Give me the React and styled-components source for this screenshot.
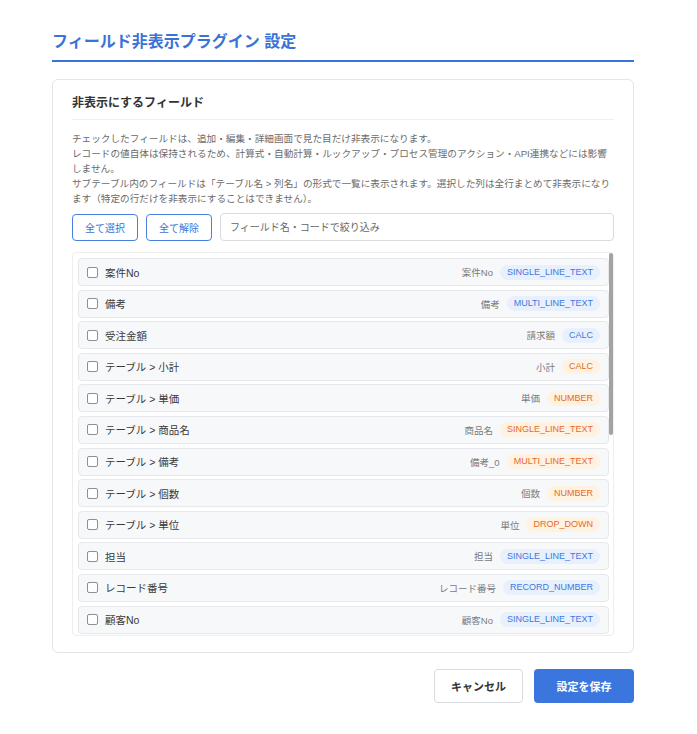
import React, { useState, useRef, useLayoutEffect } from "react";
import styled, { createGlobalStyle } from "styled-components";

const GlobalStyle = createGlobalStyle`
  html, body { margin: 0; padding: 0; background: #ffffff; }
  body { font-family: "Liberation Sans", "Noto Sans CJK JP", sans-serif; color: #333; }
  * { box-sizing: border-box; }
`;

const Page = styled.div`
  width: 582px;
  margin-left: 52px;
  padding-top: 30px;
  padding-bottom: 31px;
`;

const Title = styled.h1`
  margin: 0;
  font-size: 16px;
  line-height: 24px;
  font-weight: 700;
  color: #3a73d6;
  padding-bottom: 6px;
  border-bottom: 2px solid #3a73d6;
`;

const Card = styled.section`
  margin-top: 17px;
  border: 1px solid #e3e5e8;
  border-radius: 6px;
  padding: 14px 19px 16px 19px;
`;

const CardHeading = styled.h2`
  margin: 0;
  font-size: 12px;
  line-height: 18px;
  font-weight: 700;
  color: #333;
  padding-bottom: 7px;
  border-bottom: 1px solid #eef0f2;
`;

const Description = styled.div`
  margin-top: 11px;
  font-size: 9.65px;
  line-height: 15px;
  color: #6b6b6b;
`;

const Toolbar = styled.div`
  display: flex;
  align-items: center;
  gap: 8px;
  margin-top: 7px;
`;

const OutlineButton = styled.button`
  height: 27px;
  padding: 0 12px;
  border: 1px solid #4a80dd;
  border-radius: 4px;
  background: #fff;
  color: #3a73d6;
  font-family: inherit;
  font-size: 10px;
  flex: none;
`;

const SearchInput = styled.input`
  flex: 1;
  height: 28px;
  border: 1px solid #d9dcdf;
  border-radius: 4px;
  padding: 0 9px;
  font-family: inherit;
  font-size: 10px;
  color: #333;
  &::placeholder { color: #666; }
  &:focus { outline: none; }
`;

const ListFrame = styled.div`
  position: relative;
  margin-top: 11px;
  border: 1px solid #eceef0;
  border-radius: 4px;
`;

const List = styled.div`
  height: 382px;
  overflow-y: auto;
  padding: 5px 4px 5px 5px;
  scrollbar-width: none;
  &::-webkit-scrollbar { display: none; }
`;

const ScrollThumb = styled.div`
  position: absolute;
  right: 0;
  width: 4px;
  border-radius: 2px;
  background: #a3a3a3;
`;

const Row = styled.label`
  display: flex;
  align-items: center;
  height: 28px;
  margin-bottom: 3.6px;
  padding: 0 8px 0 8px;
  background: #f7f8fa;
  border: 1px solid #e6e8eb;
  border-radius: 4px;
`;

const Check = styled.span`
  width: 11px;
  height: 11px;
  border: 1px solid #8f8f8f;
  border-radius: 2px;
  background: ${(p) => (p.$checked ? "#3a73d6" : "#fff")};
  flex: none;
`;

const Label = styled.span`
  margin-left: 7px;
  font-size: 10.5px;
  color: #3a3a3a;
  flex: 1;
  white-space: nowrap;
`;

const Code = styled.span`
  font-size: 9.5px;
  color: #7a7a7a;
  margin-right: 7px;
`;

const Badge = styled.span`
  height: 15px;
  line-height: 15px;
  padding: 0 7px;
  border-radius: 8px;
  font-size: 9px;
  background: ${(p) => (p.$sub ? "#fff2e1" : "#e9f0fd")};
  color: ${(p) => (p.$sub ? "#e36b2c" : "#3e78dd")};
`;

const Footer = styled.div`
  display: flex;
  justify-content: flex-end;
  gap: 11px;
  margin-top: 16px;
`;

const CancelButton = styled.button`
  width: 89px;
  height: 34px;
  border: 1px solid #d9dcdf;
  border-radius: 4px;
  background: #fff;
  color: #333;
  font-family: inherit;
  font-size: 11px;
  font-weight: 700;
`;

const SaveButton = styled.button`
  width: 100px;
  height: 34px;
  border: none;
  border-radius: 4px;
  background: #3b76df;
  color: #fff;
  font-family: inherit;
  font-size: 11px;
  font-weight: 700;
`;

const fields = [
  ["案件No", "案件No", "SINGLE_LINE_TEXT", false],
  ["備考", "備考", "MULTI_LINE_TEXT", false],
  ["受注金額", "請求額", "CALC", false],
  ["テーブル > 小計", "小計", "CALC", true],
  ["テーブル > 単価", "単価", "NUMBER", true],
  ["テーブル > 商品名", "商品名", "SINGLE_LINE_TEXT", true],
  ["テーブル > 備考", "備考_0", "MULTI_LINE_TEXT", true],
  ["テーブル > 個数", "個数", "NUMBER", true],
  ["テーブル > 単位", "単位", "DROP_DOWN", true],
  ["担当", "担当", "SINGLE_LINE_TEXT", false],
  ["レコード番号", "レコード番号", "RECORD_NUMBER", false],
  ["顧客No", "顧客No", "SINGLE_LINE_TEXT", false],
  ["顧客名", "顧客名", "SINGLE_LINE_TEXT", false],
  ["住所", "住所", "SINGLE_LINE_TEXT", false],
  ["電話番号", "電話番号", "SINGLE_LINE_TEXT", false],
  ["見積日", "見積日", "DATE", false],
  ["受注日", "受注日", "DATE", false],
  ["納期", "納期", "DATE", false],
  ["ステータス", "ステータス", "STATUS", false],
  ["作業者", "作業者", "STATUS_ASSIGNEE", false],
  ["カテゴリー", "カテゴリー", "CATEGORY", false],
  ["作成者", "作成者", "CREATOR", false],
  ["作成日時", "作成日時", "CREATED_TIME", false],
  ["更新者", "更新者", "MODIFIER", false],
  ["更新日時", "更新日時", "UPDATED_TIME", false],
];

export default function App() {
  const [checked, setChecked] = useState({});
  const [filter, setFilter] = useState("");
  const [thumb, setThumb] = useState({ top: 0, height: 0 });
  const listRef = useRef(null);

  const visible = fields.filter(
    ([label, code]) => !filter || label.includes(filter) || code.includes(filter)
  );

  const updateThumb = () => {
    const el = listRef.current;
    if (!el) return;
    const { clientHeight, scrollHeight, scrollTop } = el;
    if (scrollHeight <= clientHeight) {
      setThumb({ top: 0, height: 0 });
      return;
    }
    const height = (clientHeight * clientHeight) / scrollHeight;
    const top = (scrollTop / (scrollHeight - clientHeight)) * (clientHeight - height);
    setThumb({ top, height });
  };

  useLayoutEffect(updateThumb, [visible.length]);

  const setAll = (v) => {
    const next = {};
    fields.forEach(([, code]) => (next[code] = v));
    setChecked(next);
  };

  return (
    <>
      <GlobalStyle />
      <Page>
        <Title>フィールド非表示プラグイン 設定</Title>
        <Card>
          <CardHeading>非表示にするフィールド</CardHeading>
          <Description>
            チェックしたフィールドは、追加・編集・詳細画面で見た目だけ非表示になります。
            <br />
            レコードの値自体は保持されるため、計算式・自動計算・ルックアップ・プロセス管理のアクション・API連携などには影響しません。
            <br />
            サブテーブル内のフィールドは「テーブル名 &gt; 列名」の形式で一覧に表示されます。選択した列は全行まとめて非表示になります（特定の行だけを非表示にすることはできません）。
          </Description>
          <Toolbar>
            <OutlineButton onClick={() => setAll(true)}>全て選択</OutlineButton>
            <OutlineButton onClick={() => setAll(false)}>全て解除</OutlineButton>
            <SearchInput
              placeholder="フィールド名・コードで絞り込み"
              value={filter}
              onChange={(e) => setFilter(e.target.value)}
            />
          </Toolbar>
          <ListFrame>
            <List ref={listRef} onScroll={updateThumb}>
              {visible.map(([label, code, type, sub]) => (
                <Row
                  key={code}
                  onClick={() => setChecked((c) => ({ ...c, [code]: !c[code] }))}
                >
                  <Check $checked={!!checked[code]} />
                  <Label>{label}</Label>
                  <Code>{code}</Code>
                  <Badge $sub={sub}>{type}</Badge>
                </Row>
              ))}
            </List>
            {thumb.height > 0 && (
              <ScrollThumb style={{ top: thumb.top, height: thumb.height }} />
            )}
          </ListFrame>
        </Card>
        <Footer>
          <CancelButton>キャンセル</CancelButton>
          <SaveButton>設定を保存</SaveButton>
        </Footer>
      </Page>
    </>
  );
}
